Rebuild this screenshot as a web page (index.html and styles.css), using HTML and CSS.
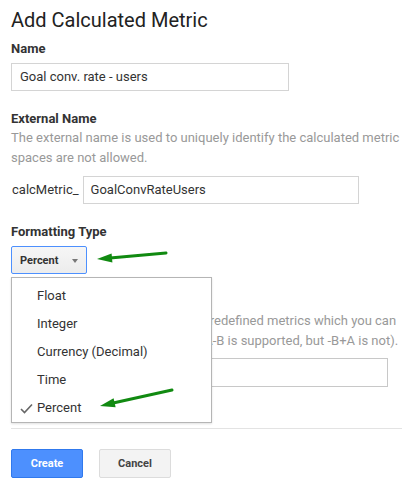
FILE: index.html
```html
<!DOCTYPE html>
<html>
<head>
<meta charset="utf-8">
<link rel="stylesheet" href="styles.css">
</head>
<body>
<div class="page">
  <h1 class="title">Add Calculated Metric</h1>

  <div class="label label-first">Name</div>
  <div class="input input-name">Goal conv. rate - users</div>

  <div class="label">External Name</div>
  <div class="desc">
    <div class="line">The external name is used to uniquely identify the calculated metric</div>
    <div class="line">spaces are not allowed.</div>
  </div>
  <div class="ext-row">
    <span class="prefix">calcMetric_</span>
    <div class="input input-ext">GoalConvRateUsers</div>
  </div>

  <div class="label">Formatting Type</div>
  <div class="select-wrap">
    <div class="select">
      <span class="select-text">Percent</span>
      <span class="caret"></span>
    </div>
    <ul class="menu">
      <li class="item">Float</li>
      <li class="item">Integer</li>
      <li class="item">Currency (Decimal)</li>
      <li class="item">Time</li>
      <li class="item selected">
        <svg class="check" width="13" height="11" viewBox="0 0 13 11"><path d="M1 6 L4.5 9.5 L12 1.5" fill="none" stroke="#666" stroke-width="1.6"/></svg>
        Percent
      </li>
    </ul>
  </div>

  <div class="label">Formula</div>
  <div class="desc">
    <div class="line">Start typing to select from all the predefined metrics which you can</div>
    <div class="line">use in your formula (for example, A-B is supported, but -B+A is not).</div>
  </div>
  <div class="input input-formula"></div>

  <div class="divider"></div>

  <div class="actions">
    <button class="btn btn-primary">Create</button>
    <button class="btn btn-secondary">Cancel</button>
  </div>
</div>

<svg class="annot" width="402" height="496" viewBox="0 0 402 496">
  <line x1="166" y1="253" x2="110" y2="258" stroke="#118a11" stroke-width="3" stroke-linecap="round"/>
  <polygon points="97,259 112.4,262.6 111.6,253.6" fill="#118a11"/>
  <line x1="172" y1="390" x2="112" y2="403.3" stroke="#118a11" stroke-width="3" stroke-linecap="round"/>
  <polygon points="100,406 115.6,407.2 113.6,398.3" fill="#118a11"/>
</svg>
</body>
</html>
```

FILE: styles.css
```css
html, body {
  margin: 0;
  padding: 0;
  background: #fff;
}
body {
  width: 402px;
  height: 496px;
  overflow: hidden;
  position: relative;
  font-family: Roboto, "Liberation Sans", Arial, sans-serif;
  color: #222;
}
.page {
  padding-left: 11px;
}
.title {
  margin: 8px 0 0 0;
  font-size: 20px;
  line-height: 24px;
  font-weight: 400;
  color: #222;
}
.label {
  margin-top: 20px;
  font-size: 13px;
  line-height: 16px;
  font-weight: 700;
  color: #333;
}
.label-first {
  margin-top: 9px;
}
.input {
  box-sizing: border-box;
  border: 1px solid #d4d4d4;
  height: 28px;
  font-size: 13px;
  line-height: 26px;
  color: #333;
  background: #fff;
  white-space: nowrap;
}
.input-name {
  margin-top: 6px;
  width: 278px;
  padding-left: 8px;
}
.desc {
  margin-top: 1px;
  font-size: 13px;
  line-height: 20px;
  color: #999;
  white-space: nowrap;
}
.ext-row {
  margin-top: 8px;
  display: flex;
  align-items: center;
  gap: 4px;
}
.prefix {
  padding-left: 1px;
  font-size: 13px;
  line-height: 20px;
  color: #333;
}
.input-ext {
  width: 276px;
  padding-left: 7px;
}
.select-wrap {
  position: relative;
  margin-top: 6px;
  width: 76px;
}
.select {
  box-sizing: border-box;
  width: 76px;
  height: 28px;
  border: 1px solid #4d90fe;
  border-radius: 2px;
  background: linear-gradient(#f6f6f6, #ececec);
  display: flex;
  align-items: center;
  padding: 0 8px;
  justify-content: space-between;
}
.select-text {
  font-size: 11px;
  font-weight: 700;
  color: #333;
}
.caret {
  width: 0;
  height: 0;
  border-left: 3.5px solid transparent;
  border-right: 3.5px solid transparent;
  border-top: 4px solid #777;
  margin-top: 2px;
}
.menu {
  position: absolute;
  top: 31px;
  left: 0;
  z-index: 5;
  box-sizing: border-box;
  width: 201px;
  margin: 0;
  padding: 4px 0 0 0;
  list-style: none;
  background: #fff;
  border: 1px solid #b5b5b5;
  box-shadow: 0 1px 2px rgba(0,0,0,0.12);
}
.item {
  position: relative;
  height: 28px;
  line-height: 28px;
  padding-left: 25px;
  font-size: 13px;
  color: #333;
  white-space: nowrap;
}
.check {
  position: absolute;
  left: 8px;
  top: 9px;
}
.input-formula {
  margin-top: 7px;
  width: 377px;
  height: 29px;
  border-color: #c8c8c8;
}
.divider {
  margin-top: 41px;
  height: 1px;
  background: #e3e3e3;
}
.actions {
  margin-top: 20px;
  display: flex;
  gap: 16px;
}
.btn {
  box-sizing: border-box;
  width: 72px;
  height: 29px;
  border-radius: 2px;
  font-family: Roboto, "Liberation Sans", Arial, sans-serif;
  font-size: 11px;
  font-weight: 700;
  padding: 0;
}
.btn-primary {
  background: #4d90fe;
  border: 1px solid #3079ed;
  color: #fff;
}
.btn-secondary {
  background: #f3f3f3;
  border: 1px solid #dcdcdc;
  color: #444;
}
.annot {
  position: absolute;
  top: 0;
  left: 0;
  pointer-events: none;
  z-index: 10;
}
```
